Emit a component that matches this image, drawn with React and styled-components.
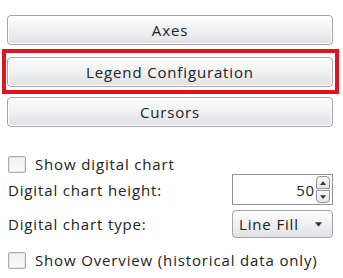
import React from "react";
import styled, { createGlobalStyle } from "styled-components";

const Global = createGlobalStyle`
  html, body { margin: 0; padding: 0; background: #ffffff; }
  body {
    font-family: "Open Sans", "Noto Sans", "DejaVu Sans", sans-serif;
    color: #222;
    letter-spacing: 0.85px;
  }
`;

const Page = styled.div`
  width: 343px;
  height: 278px;
  box-sizing: border-box;
  padding: 15px 10px 0 7px;
  display: flex;
  flex-direction: column;
  overflow: hidden;
`;

const ButtonStack = styled.div`
  display: flex;
  flex-direction: column;
`;

const NavButton = styled.button`
  box-sizing: border-box;
  width: 326px;
  height: 30px;
  margin: 0;
  padding: 0;
  border: 1px solid #a3a5a8;
  border-radius: 4px;
  background: linear-gradient(#fdfdfd 0%, #f1f2f3 45%, #dfe1e4 100%);
  box-shadow: inset 0 0 0 1px #ffffff;
  font-family: inherit;
  letter-spacing: inherit;
  font-size: 15px;
  color: #222;
  display: flex;
  align-items: center;
  justify-content: center;
`;

const Highlight = styled.div`
  margin: 4px -6px 3px -5px;
  padding: 4px 2px 3px 1px;
  border: 4px solid #e0151f;
`;

const Form = styled.div`
  margin-top: 27px;
  padding-left: 1px;
  display: flex;
  flex-direction: column;
`;

const CheckRow = styled.label`
  display: flex;
  align-items: center;
  gap: 9px;
  height: 20px;
  font-size: 15px;
  margin-top: ${(p) => p.$top || 0}px;
`;

const Box = styled.span`
  box-sizing: border-box;
  width: 18px;
  height: 17px;
  border: 1px solid #a9abae;
  border-radius: 2px;
  background: linear-gradient(#f0f1f2, #fbfbfc);
  box-shadow: inset 0 0 0 1px #e3e5e8;
`;

const FieldRow = styled.div`
  display: flex;
  align-items: center;
  justify-content: space-between;
  height: ${(p) => p.$h}px;
  margin-top: ${(p) => p.$top || 0}px;
  font-size: 15px;
`;

const NumberBox = styled.div`
  box-sizing: border-box;
  width: 101px;
  height: 31px;
  border: 1px solid #8e9094;
  display: flex;
  align-items: center;
  justify-content: flex-end;
  padding-right: 2px;
  font-size: 15px;
  background: #fff;
`;

const NumValue = styled.span`
  margin-right: 1px;
`;

const Spinner = styled.div`
  display: flex;
  flex-direction: column;
  gap: 1px;
`;

const SpinBtn = styled.span`
  box-sizing: border-box;
  width: 14px;
  height: 13px;
  border: 1px solid #8f9296;
  border-radius: ${(p) => (p.$up ? "4px 4px 1px 1px" : "1px 1px 4px 4px")};
  background: linear-gradient(#fafafa, #e2e4e6);
  display: flex;
  align-items: center;
  justify-content: center;
`;

const Select = styled.div`
  box-sizing: border-box;
  width: 101px;
  height: 28px;
  border: 1px solid #a3a5a8;
  border-radius: 4px;
  background: linear-gradient(#fdfdfd 0%, #f1f2f3 45%, #dfe1e4 100%);
  display: flex;
  align-items: center;
  justify-content: space-between;
  padding: 0 10px 0 6px;
  font-size: 15px;
`;

const Tri = ({ up, size = 6 }) => (
  <svg width={size + 2} height={size} viewBox="0 0 8 5">
    <path d={up ? "M0 5 L4 0 L8 5 Z" : "M0 0 L8 0 L4 5 Z"} fill="#333" />
  </svg>
);

export default function App() {
  return (
    <>
      <Global />
      <Page>
        <ButtonStack>
          <NavButton>Axes</NavButton>
          <Highlight>
            <NavButton>Legend Configuration</NavButton>
          </Highlight>
          <NavButton>Cursors</NavButton>
        </ButtonStack>
        <Form>
          <CheckRow>
            <Box />
            Show digital chart
          </CheckRow>
          <FieldRow $h={31} $top={0}>
            <span>Digital chart height:</span>
            <NumberBox>
              <NumValue>50</NumValue>
              <Spinner>
                <SpinBtn $up>
                  <Tri up size={4} />
                </SpinBtn>
                <SpinBtn>
                  <Tri size={4} />
                </SpinBtn>
              </Spinner>
            </NumberBox>
          </FieldRow>
          <FieldRow $h={28} $top={5}>
            <span>Digital chart type:</span>
            <Select>
              <span>Line Fill</span>
              <Tri size={5} />
            </Select>
          </FieldRow>
          <CheckRow $top={12}>
            <Box />
            Show Overview (historical data only)
          </CheckRow>
        </Form>
      </Page>
    </>
  );
}
